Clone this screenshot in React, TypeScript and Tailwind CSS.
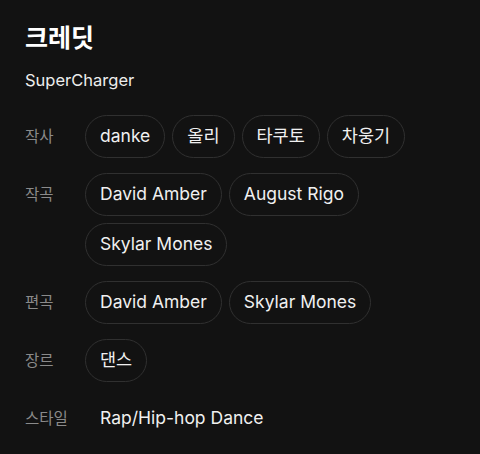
import React from 'react';

const rows: { label: string; items?: string[]; text?: string }[] = [
  { label: '작사', items: ['danke', '올리', '타쿠토', '차웅기'] },
  { label: '작곡', items: ['David Amber', 'August Rigo', 'Skylar Mones'] },
  { label: '편곡', items: ['David Amber', 'Skylar Mones'] },
  { label: '장르', items: ['댄스'] },
  { label: '스타일', text: 'Rap/Hip-hop Dance' },
];

const App: React.FC = () => {
  return (
    <div
      className="min-h-[454px] w-[480px] bg-[#121212] pl-[25px] pr-[20px] pt-[22px]"
      style={{ fontFamily: "Inter, 'Noto Sans CJK KR', sans-serif" }}
    >
      <h1 className="text-[25px] font-bold leading-[32px] text-white">크레딧</h1>
      <p className="mt-[14px] text-[16.5px] leading-[24px] text-[#ededed]">SuperCharger</p>

      <div className="mt-[23px] flex flex-col gap-[15px]">
        {rows.map((row) => (
          <div key={row.label} className="flex items-start">
            <div className="flex h-[43px] w-[60px] shrink-0 items-center text-[15.5px] text-[#8a8a8a]">
              {row.label}
            </div>
            {row.items ? (
              <div className="flex flex-wrap gap-x-[7px] gap-y-[7px]">
                {row.items.map((item, i) => (
                  <span
                    key={i}
                    className="flex h-[43px] items-center rounded-full border border-[#303030] px-[14px] text-[17.5px] text-[#f0f0f0]"
                  >
                    {item}
                  </span>
                ))}
              </div>
            ) : (
              <div className="flex h-[43px] items-center pl-[15px] text-[17.5px] text-[#f0f0f0]">
                {row.text}
              </div>
            )}
          </div>
        ))}
      </div>
    </div>
  );
};

export default App;
